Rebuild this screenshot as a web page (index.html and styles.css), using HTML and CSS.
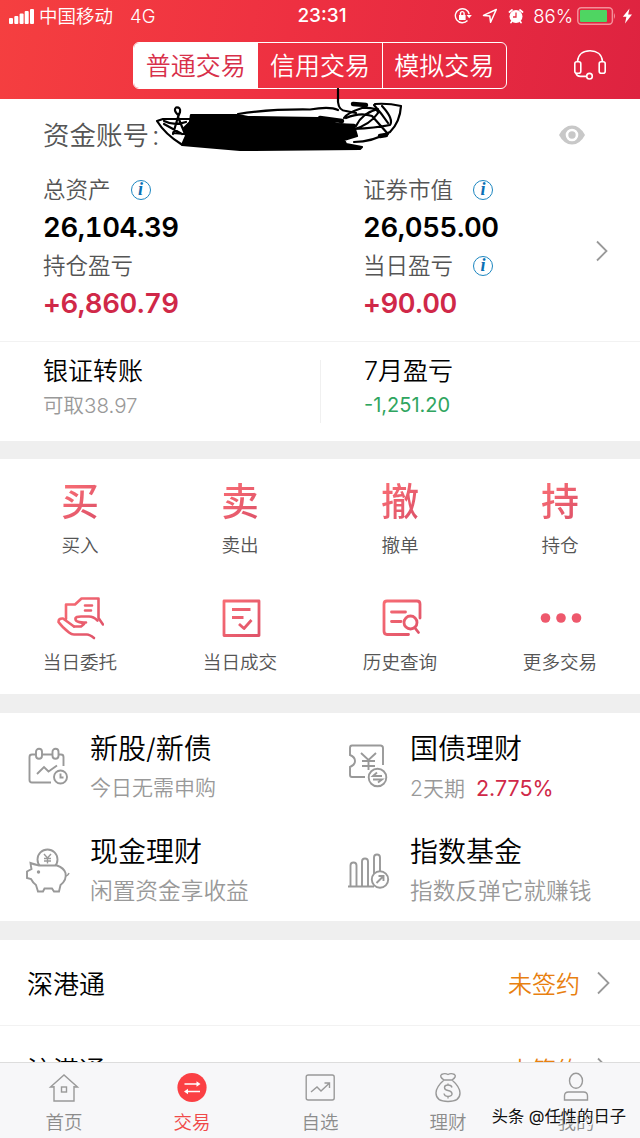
FILE: index.html
```
<!DOCTYPE html>
<html lang="zh-CN">
<head>
  <meta charset="UTF-8">
  <meta name="viewport" content="width=device-width, initial-scale=1.0">
  <title>交易</title>
  <link rel="stylesheet" href="styles.css">
</head>
<body>
  <svg class="defs" width="0" height="0">
    <defs>
      <linearGradient id="pink" gradientUnits="userSpaceOnUse" x1="0" y1="0" x2="48" y2="44">
        <stop offset="0" stop-color="#fb7075"/>
        <stop offset="1" stop-color="#dc5068"/>
      </linearGradient>
    </defs>
  </svg>

  <header class="header">
    <div class="status">
      <div class="status-left">
        <svg width="26" height="16" viewBox="0 0 26 16" fill="#fff">
          <rect x="0" y="10" width="4" height="6" rx="1"/>
          <rect x="5.3" y="8" width="4" height="8" rx="1"/>
          <rect x="10.6" y="5.5" width="4" height="10.5" rx="1"/>
          <rect x="15.7" y="3" width="4" height="13" rx="1"/>
          <rect x="21" y="1" width="4" height="15" rx="1"/>
        </svg>
        <span class="carrier">中国移动</span>
        <span class="network">4G</span>
      </div>
      <div class="time">23:31</div>
      <div class="status-right">
        <svg width="18" height="18" viewBox="0 0 18 18" fill="none" stroke="#fff" stroke-width="1.4">
          <path d="M13.5 13.5A7 7 0 1 1 15.2 7.2"/>
          <path d="M12.6 8h5.2l-2.6 3.3z" fill="#fff" stroke="none"/>
          <rect x="5" y="8" width="6.6" height="5" fill="#fff" stroke="none"/>
          <path d="M6.5 8.5V6.4a1.8 1.8 0 0 1 3.6 0v2.1"/>
        </svg>
        <svg class="arrow" width="16" height="16" viewBox="0 0 16 16" fill="none" stroke="#fff" stroke-width="1.5" stroke-linejoin="round">
          <path d="M14.3 1.5L1.5 7.4l6.3.7.8 6.2z"/>
        </svg>
        <svg class="alarm" width="16" height="16" viewBox="0 0 16 16">
          <circle cx="8" cy="8.5" r="6.5" fill="#fff"/>
          <path d="M1.5 4L4 2M14.5 4L12 2M3.8 13.5l-.8 1M12.2 13.5l.8 1" stroke="#fff" stroke-width="1.8" stroke-linecap="round"/>
          <path d="M8 4.5V9H5" fill="none" stroke="#e83044" stroke-width="1.3"/>
        </svg>
        <span class="percent">86%</span>
        <svg width="40" height="18" viewBox="0 0 40 18">
          <rect x=".8" y=".8" width="34.6" height="16.4" rx="3.4" fill="none" stroke="#f4909a" stroke-width="1.5"/>
          <rect x="3" y="3" width="27" height="12" rx="1" fill="#4fd562"/>
          <path d="M37 6q2 3 0 6z" fill="#f4909a"/>
        </svg>
        <svg class="bolt" width="11" height="16" viewBox="0 0 11 16"><path d="M7.5.5L.8 8.8h3.6L3 15.5l7-9H6.2z" fill="#fff"/></svg>
      </div>
    </div>
    <div class="nav">
      <div class="segment">
        <div class="segment-item active">普通交易</div>
        <div class="segment-item">信用交易</div>
        <div class="segment-item">模拟交易</div>
      </div>
      <svg class="headset" width="34" height="32" viewBox="0 0 34 32" fill="none" stroke="#fff" stroke-width="1.6">
        <path d="M4.5 12.5C5 5 10.5 1.7 17 1.7S29 5 29.5 12.5"/>
        <rect x="1.8" y="12.8" width="6" height="11.5" rx="2"/>
        <rect x="26.2" y="12.8" width="6" height="11.5" rx="2"/>
        <path d="M3 24c.5 2.6 2 3.4 4.5 3.4h6.2"/>
        <circle cx="16.5" cy="27.2" r="2.8"/>
      </svg>
    </div>
  </header>

  <section class="assets">
    <div class="account">
      <span>资金账号<span class="colon">:</span></span>
      <svg width="26" height="20" viewBox="0 0 26 20">
        <path d="M0 10Q5 .5 13 .5T26 10Q21 19.5 13 19.5T0 10z" fill="#c8c8c8"/>
        <circle cx="13" cy="10" r="5" fill="#c8c8c8" stroke="#fff" stroke-width="2.6"/>
      </svg>
    </div>
    <div class="asset-grid">
      <div class="asset-col">
        <div class="label">总资产<span class="info">i</span></div>
        <div class="value">26,104.39</div>
        <div class="label">持仓盈亏</div>
        <div class="value red">+6,860.79</div>
      </div>
      <div class="asset-col">
        <div class="label">证券市值<span class="info">i</span></div>
        <div class="value">26,055.00</div>
        <div class="label">当日盈亏<span class="info">i</span></div>
        <div class="value red">+90.00</div>
      </div>
      <svg class="chevron" width="14" height="22" viewBox="0 0 14 22"><path d="M2 1.5L11.5 11L2 20.5"/></svg>
    </div>
    <svg class="scribble" width="260" height="70" viewBox="150 88 260 70" fill="none" stroke="#000" stroke-width="2.2" stroke-linecap="round" stroke-linejoin="round">
      <path d="M191 115L238 115L248 117L318 118L338 124L354 126L357 136L344 140L346 144L362 147L360 149L240 150L205 147L182 145L186 136L184 128L190 122z" fill="#000"/>
      <path d="M181 144Q165 134 157 121L163 119L190 119M182 134L164 124M164 121Q174 126 186 122M178 115Q173 110 176 107.5Q181 107 180 112L178 117L173 134M178 117L185 134L173 133"/>
      <path d="M238 114Q270 109 310 109.5Q330 106 338 110M338 89V102Q339 111 346 111L356 113M375 104Q388 103 401 106Q400 122 390 132Q372 142 354 142"/>
      <path d="M344 118Q347 113 362 108Q378 107 378 113Q370 125 352 130M346 118Q360 112 372 116L388 134M382 106Q394 119 390 125Q375 128 354 129M374 105Q382 114 388 123M356 126Q362 113 378 109"/>
      <path d="M320 118L342 121M328 125L354 126M353 104L366 105M380 136L386 135" stroke-width="4.5"/>
    </svg>
  </section>

  <section class="transfer">
    <div class="transfer-item">
      <div class="transfer-title">银证转账</div>
      <div class="transfer-sub">可取38.97</div>
    </div>
    <div class="transfer-item">
      <div class="transfer-title">7月盈亏</div>
      <div class="transfer-sub green">-1,251.20</div>
    </div>
  </section>

  <section class="actions">
    <div class="action"><div class="glyph">买</div><span>买入</span></div>
    <div class="action"><div class="glyph">卖</div><span>卖出</span></div>
    <div class="action"><div class="glyph">撤</div><span>撤单</span></div>
    <div class="action"><div class="glyph">持</div><span>持仓</span></div>
    <div class="action">
      <svg width="48" height="44" viewBox="0 0 48 44" fill="none" stroke="url(#pink)" stroke-width="2.6" stroke-linecap="round" stroke-linejoin="round">
        <path d="M10 23V8.5H19L25.5 2.5H42.5V22L47 28.5"/>
        <path d="M29 9.5H36M29 14.5H35"/>
        <path d="M30 26.5C26 27 20 26 19.5 23.5C19 21 22 20.5 25 20.5H33C37 20.5 39 22 41.5 24.5"/>
        <path d="M18 30.5L7 22.5Q2.5 22 2.5 26Q6 31 13 36.5Q15.5 38.5 18 38.5H31Q33.5 38.5 38 42"/>
        <path d="M18 30.5H25L28 28"/>
      </svg>
      <span>当日委托</span>
    </div>
    <div class="action">
      <svg width="48" height="44" viewBox="0 0 48 44" fill="none" stroke="url(#pink)" stroke-width="2.8" stroke-linejoin="round">
        <rect x="8" y="5" width="35" height="34.5"/>
        <path d="M16 13.5H34.5M16 21.5H27.5M23 28L28 32.5L35.5 24"/>
      </svg>
      <span>当日成交</span>
    </div>
    <div class="action">
      <svg width="48" height="44" viewBox="0 0 48 44" fill="none" stroke="url(#pink)" stroke-width="2.8" stroke-linecap="round">
        <path d="M44 22V8Q44 5 41 5H11Q8 5 8 8V35Q8 38.5 11 38.5H32.5"/>
        <path d="M15.5 16H29.5M15.5 25.5H25M39 32L42.5 36.5"/>
        <circle cx="34.5" cy="26.5" r="6.5"/>
      </svg>
      <span>历史查询</span>
    </div>
    <div class="action">
      <svg width="48" height="44" viewBox="0 0 48 44" fill="#ee586c">
        <circle cx="9.5" cy="22" r="4.8"/><circle cx="25" cy="22" r="4.8"/><circle cx="40.5" cy="22" r="4.8"/>
      </svg>
      <span>更多交易</span>
    </div>
  </section>

  <section class="products">
    <div class="product">
      <svg width="44" height="48" viewBox="0 0 44 48">
        <path d="M10 10.5H6Q3.5 10.5 3.5 13V36Q3.5 38.5 6 38.5H25M16 10.5H26.5M32.5 10.5H35Q37.5 10.5 37.5 13V22"/>
        <rect x="10" y="4.8" width="6" height="10" rx="3"/><rect x="26.5" y="4.8" width="6" height="10" rx="3"/>
        <path d="M11 30L18 23L22.5 27.5L31 21.5"/>
        <circle cx="34.5" cy="33" r="6.5"/><path d="M34.5 29.5V33.5H37.5"/>
      </svg>
      <div>
        <div class="product-title">新股/新债</div>
        <div class="product-sub narrow">今日无需申购</div>
      </div>
    </div>
    <div class="product">
      <svg width="44" height="48" viewBox="0 0 44 48">
        <path d="M37 21V4Q37 1.5 34.5 1.5H6Q4 1.5 4 4V11Q9 13 9 17T4 23V31Q4 33 6 33H19"/>
        <path d="M15 9L22.5 16L30 9M22.5 16V26M16 17H29M16 22H29"/>
        <circle cx="31.5" cy="33.5" r="8.8"/><path d="M36 32H27L31 28.5M27 35.5H36L32 38.5"/>
      </svg>
      <div>
        <div class="product-title">国债理财</div>
        <div class="product-sub narrow">2天期<span class="rate">2.775%</span></div>
      </div>
    </div>
    <div class="product">
      <svg width="44" height="48" viewBox="0 0 44 48">
        <circle cx="21.5" cy="12.5" r="10"/>
        <path d="M13 18.5Q7 17 4.5 16Q5 20 5.5 22L1 24.5V31L5 32Q7 36 10 38L12 44.5H17L18.5 41.5H26L28 44.5H33L34.5 38Q41 33 39.5 26Q38 21 31 18.5H13z" fill="#fff"/>
        <path d="M39 29Q42 29 43 26M18 7L21.5 11L25 7M21.5 11V16.5M18 11.5H25M18 14H25" stroke-width="1.4"/>
        <circle cx="12.5" cy="25" r="1.7" fill="#999" stroke="none"/>
      </svg>
      <div>
        <div class="product-title">现金理财</div>
        <div class="product-sub">闲置资金享收益</div>
      </div>
    </div>
    <div class="product">
      <svg width="44" height="48" viewBox="0 0 44 48">
        <path d="M2 39.5H28M4.5 39V18.5a3 3 0 0 1 6 0V39M16 39V14.5a3 3 0 0 1 6 0V39M28 28V10.5a3 3 0 0 1 6 0V24"/>
        <circle cx="34" cy="32.5" r="8.2" fill="#fff"/><path d="M30.5 36L37 29.5M32.5 29H37.5V34"/>
      </svg>
      <div>
        <div class="product-title">指数基金</div>
        <div class="product-sub">指数反弹它就赚钱</div>
      </div>
    </div>
  </section>

  <section class="list">
    <div class="list-row">
      <span>深港通</span>
      <span class="state">未签约</span>
      <svg class="chevron" width="15" height="24" viewBox="0 0 15 24"><path d="M2 1.5L12.5 12L2 22.5"/></svg>
    </div>
    <div class="list-row">
      <span>沪港通</span>
      <span class="state">未签约</span>
      <svg class="chevron" width="15" height="24" viewBox="0 0 15 24"><path d="M2 1.5L12.5 12L2 22.5"/></svg>
    </div>
  </section>

  <nav class="tabbar">
    <div class="tab">
      <svg width="32" height="32" viewBox="0 0 32 32"><path d="M6 15H2.5L16 3L29.5 15H26M6 14V29H26V14"/><rect x="13.5" y="15" width="5" height="5"/></svg>
      <span>首页</span>
    </div>
    <div class="tab current">
      <svg width="32" height="32" viewBox="0 0 32 32"><circle cx="16" cy="15.5" r="14.6" fill="#fb4044" stroke="none"/><path d="M8.5 12H22M24 19.5H10" stroke="#fff" stroke-width="1.6"/><path d="M20.5 9.2L24.5 12L20.5 14.8zM12 16.7L8 19.5L12 22.3z" fill="#fff" stroke="none"/></svg>
      <span>交易</span>
    </div>
    <div class="tab">
      <svg width="32" height="32" viewBox="0 0 32 32"><rect x="2.2" y="3" width="28" height="25" rx="2"/><path d="M7 20L13 15L17 19L25 11.5M20.5 11H25.5V16"/></svg>
      <span>自选</span>
    </div>
    <div class="tab">
      <svg width="32" height="32" viewBox="0 0 32 32"><path d="M12 8Q7 4.5 9.5 2.5Q13 .8 16 2.5Q19 .8 22.5 2.5Q25 4.5 20 8zM12 8Q4 15 4 21Q4 29.5 16 29.5T28 21Q28 15 20 8"/><path d="M20 15.5Q19.5 13 16 13Q12.5 13 12.5 15.5T16 18.5T20 21.5T16 24.5Q12.5 24.5 12 21.5M16 11.5V13M16 24.5V26.5"/></svg>
      <span>理财</span>
    </div>
    <div class="tab">
      <svg width="32" height="32" viewBox="0 0 32 32"><ellipse cx="16" cy="8.8" rx="6.5" ry="7.5"/><path d="M4.5 28V24Q4.5 20 8.5 20H23.5Q27.5 20 27.5 24V28z"/></svg>
      <span>我的</span>
    </div>
    <div class="watermark">头条 @任性的日子</div>
  </nav>
</body>
</html>
```

FILE: styles.css
```
* {
  box-sizing: border-box;
}

body {
  margin: 0;
  width: 640px;
  height: 1138px;
  overflow: hidden;
  display: flex;
  flex-direction: column;
  background-color: #efefef;
  color: #000;
  font-family: Inter, "Noto Sans CJK SC", sans-serif;
  font-weight: 350;
}

svg {
  display: block;
  flex: none;
}

.defs {
  position: absolute;
}

/* Header */
.header {
  flex: none;
  height: 99px;
  background: linear-gradient(100deg, #f53f40 0%, #ee3041 45%, #de2340 100%);
  color: #fff;
}

.status {
  display: grid;
  grid-template-columns: 1fr auto 1fr;
  align-items: center;
  height: 32px;
  padding: 0 7px 0 9px;
  font-size: 18.5px;
  line-height: 32px;
}

.status-left,
.status-right {
  display: flex;
  align-items: center;
}

.status-right {
  justify-content: flex-end;
}

.carrier {
  margin-left: 4px;
}

.network {
  margin-left: 17px;
}

.time {
  padding-left: 2px;
  font-weight: 500;
  font-size: 19px;
}

.arrow {
  margin-left: 10px;
}

.alarm {
  margin-left: 10px;
}

.percent {
  margin: 0 4px 0 9px;
}

.bolt {
  margin-left: 5px;
}

.nav {
  display: flex;
  align-items: center;
  justify-content: space-between;
  height: 66px;
  padding: 0 33px 0 133px;
}

.segment {
  display: flex;
  width: 374px;
  height: 47px;
  border: 1.5px solid #fff;
  border-radius: 6px;
  overflow: hidden;
}

.segment-item {
  flex: 1;
  font-size: 25px;
  line-height: 46px;
  text-align: center;
}

.segment-item + .segment-item {
  border-left: 1px solid #fff;
}

.segment-item.active {
  background-color: #fff;
  color: #d8304a;
}

/* Assets */
.assets {
  position: relative;
  flex: none;
  height: 243px;
  padding-top: 16px;
  background-color: #fff;
  border-bottom: 1px solid #f2f2f2;
}

.account {
  display: flex;
  align-items: center;
  justify-content: space-between;
  height: 40px;
  padding: 0 55px 0 43px;
  color: #555;
  font-size: 26.5px;
  line-height: 40px;
}

.colon {
  margin-left: 3px;
}

.asset-grid {
  display: flex;
  align-items: center;
  padding: 16px 31px 0 43px;
}

.asset-grid .chevron {
  margin: 7px 0 0 1px;
}

.asset-col {
  width: 320px;
}

.asset-col + .asset-col {
  width: 231px;
}

.label {
  display: flex;
  align-items: center;
  height: 37px;
  color: #555;
  font-size: 22.5px;
  line-height: 36px;
}

.info {
  width: 20px;
  height: 20px;
  margin-left: 20px;
  border: 1px solid #1c86c0;
  border-radius: 50%;
  color: #0b70b4;
  font-family: "Liberation Serif", serif;
  font-size: 18px;
  font-style: italic;
  font-weight: 700;
  line-height: 17px;
  text-align: center;
}

.value {
  height: 39px;
  font-size: 27.5px;
  font-weight: 600;
  font-variant-numeric: tabular-nums;
  letter-spacing: -0.4px;
  line-height: 39px;
}

.red {
  color: #d02848;
}

.scribble {
  position: absolute;
  top: -11px;
  left: 150px;
}

.chevron {
  fill: none;
  stroke: #999;
  stroke-width: 1.8;
}

/* Bank transfer */
.transfer {
  display: flex;
  flex: none;
  height: 99px;
  padding-top: 18px;
  background-color: #fff;
}

.transfer-item {
  width: 320px;
  height: 63px;
  padding-left: 43px;
}

.transfer-item + .transfer-item {
  border-left: 1px solid #f0f0f0;
}

.transfer-title {
  height: 23px;
  font-size: 25px;
  line-height: 23px;
}

.transfer-sub {
  height: 45px;
  color: #999;
  font-size: 20.5px;
  line-height: 45px;
}

.green {
  color: #2fa560;
  font-size: 20px;
  font-weight: 400;
}

/* Trade actions */
.actions {
  display: grid;
  flex: none;
  grid-template-columns: repeat(4, 1fr);
  grid-template-rows: 117px 118px;
  height: 235px;
  margin-top: 18px;
  background-color: #fff;
}

.action {
  display: flex;
  flex-direction: column;
  align-items: center;
  padding-top: 20px;
  color: #555;
  font-size: 18.6px;
}

.action span {
  line-height: 44px;
}

.glyph {
  height: 44px;
  background: linear-gradient(135deg, #fb7075, #dc5068);
  -webkit-background-clip: text;
  background-clip: text;
  color: transparent;
  font-size: 38px;
  font-weight: 500;
  line-height: 44px;
}

/* Products */
.products {
  display: grid;
  flex: none;
  grid-template-columns: 1fr 1fr;
  grid-template-rows: 103px 105px;
  height: 208px;
  margin-top: 19px;
  background-color: #fff;
}

.product {
  display: flex;
  padding: 16px 0 0 26px;
}

.product svg {
  margin: 15px 20px 0 0;
  fill: none;
  stroke: #999;
  stroke-width: 1.9;
}

.product-title {
  font-size: 28px;
  line-height: 40px;
}

.product-sub {
  color: #999;
  font-size: 22.7px;
  line-height: 38px;
}

.product-sub.narrow {
  font-size: 21px;
}

.rate {
  margin-left: 11px;
  color: #d02848;
  font-size: 21.5px;
  font-weight: 400;
}

/* List */
.list {
  flex: 1;
  min-height: 0;
  margin-top: 19px;
  overflow: hidden;
  background-color: #fff;
}

.list-row {
  display: flex;
  align-items: center;
  height: 86px;
  padding: 0 29px 0 27px;
  border-bottom: 1px solid #f2f2f2;
  font-size: 26px;
}

.state {
  margin: 0 16px 0 auto;
  color: #e88010;
  font-size: 24px;
}

/* Tab bar */
.tabbar {
  position: relative;
  display: flex;
  flex: none;
  height: 76px;
  border-top: 1px solid #ddd;
  background-color: #f7f7f9;
}

.tab {
  display: flex;
  flex: 1;
  flex-direction: column;
  align-items: center;
  padding-top: 9px;
  color: #8c8c8c;
  font-size: 18.5px;
}

.tab svg {
  fill: none;
  stroke: #999;
  stroke-width: 1.4;
}

.tab span {
  line-height: 37px;
}

.tab.current {
  color: #f04848;
}

.watermark {
  position: absolute;
  right: 14px;
  bottom: 10px;
  color: #111;
  font-size: 16.3px;
  font-weight: 400;
  line-height: 24px;
  text-shadow: 1px 1px 0 #fff;
  white-space: nowrap;
}
```
